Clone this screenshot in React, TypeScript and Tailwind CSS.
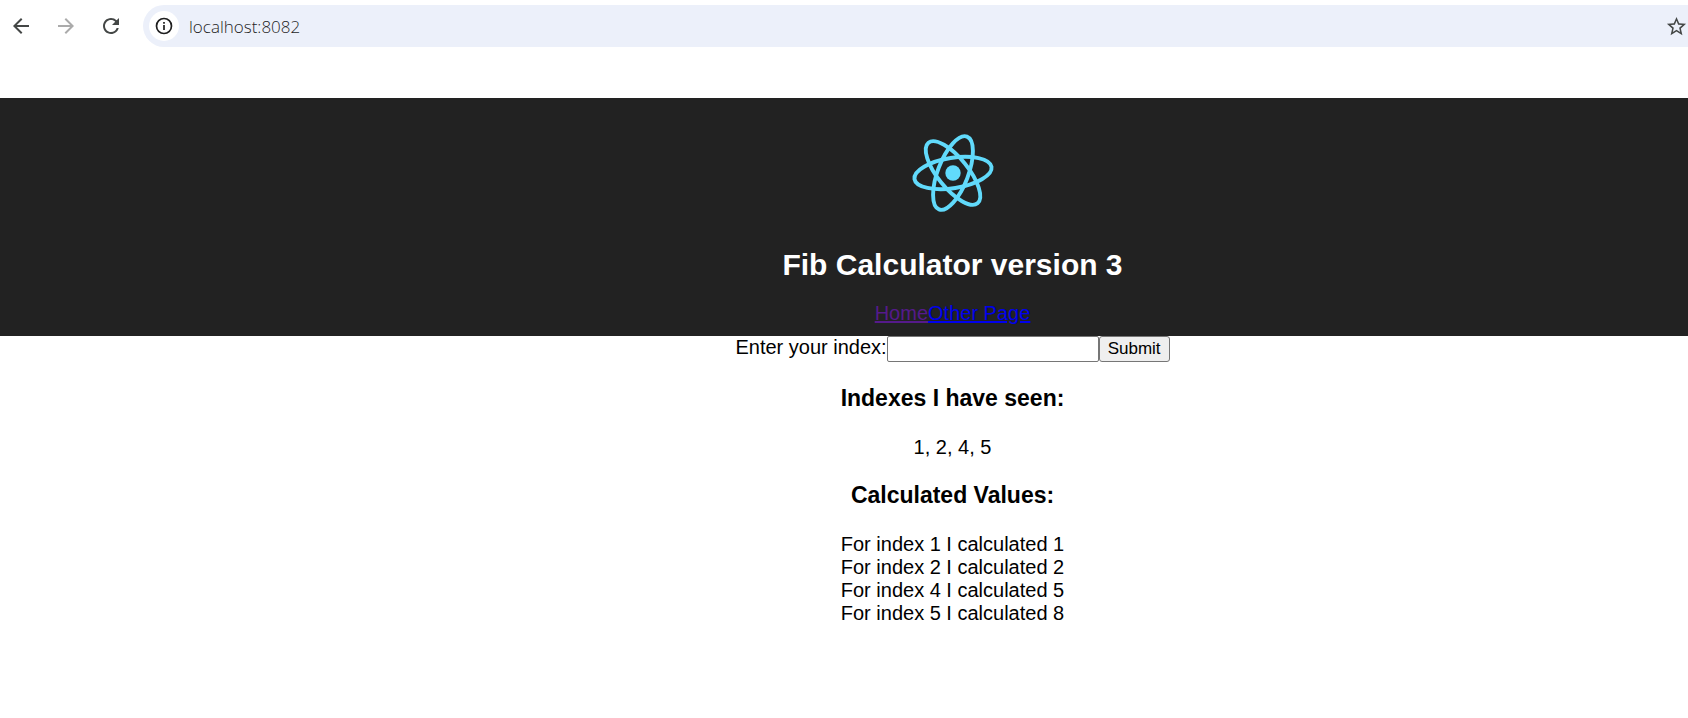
import React from "react";
import { MdArrowBack, MdArrowForward, MdRefresh, MdStarBorder } from "react-icons/md";

const seenIndexes = [1, 2, 4, 5];
const values = [
  { index: 1, value: 1 },
  { index: 2, value: 2 },
  { index: 4, value: 5 },
  { index: 5, value: 8 },
];

function BrowserBar() {
  return (
    <div className="flex items-center pt-[5px] font-['Open_Sans','Noto_Sans',sans-serif]">
      <div className="flex w-[143px] shrink-0 items-center gap-[21px] pl-[9px]">
        <button type="button" aria-label="Back" className="text-[#444746]">
          <MdArrowBack className="size-6" />
        </button>
        <button type="button" aria-label="Forward" className="text-[#ababab]">
          <MdArrowForward className="size-6" />
        </button>
        <button type="button" aria-label="Reload" className="text-[#444746]">
          <MdRefresh className="size-6" />
        </button>
      </div>
      <div className="flex h-[42px] flex-1 items-center rounded-l-full bg-[#ecf0fa] pl-[6px]">
        <button
          type="button"
          aria-label="Site information"
          className="flex size-[30px] items-center justify-center rounded-full bg-white text-[#1f1f1f]"
        >
          <svg viewBox="0 0 20 20" className="size-5" fill="none" stroke="currentColor" strokeWidth="1.7">
            <circle cx="10" cy="10" r="7.5" />
            <path d="M10 9v5M10 6v1.8" />
          </svg>
        </button>
        <input
          type="text"
          aria-label="Address"
          defaultValue="localhost:8082"
          className="min-w-0 flex-1 bg-transparent pl-[10px] text-[17px] font-light text-[#1f1f1f] outline-none"
        />
        <button type="button" aria-label="Bookmark this page" className="text-[#444746]">
          <MdStarBorder className="size-[23px]" />
        </button>
      </div>
    </div>
  );
}

function Logo() {
  return (
    <svg viewBox="-50 -50 100 100" className="size-[100px]" aria-label="logo" role="img">
      <circle r="7.7" fill="#61dafb" />
      <g fill="none" stroke="#61dafb" strokeWidth="3.9" transform="rotate(-9)">
        <ellipse rx="39" ry="15.2" />
        <ellipse rx="39" ry="15.2" transform="rotate(60)" />
        <ellipse rx="39" ry="15.2" transform="rotate(120)" />
      </g>
    </svg>
  );
}

export default function App() {
  return (
    <div className="bg-white font-['Liberation_Sans',Arial,sans-serif] text-xl leading-[23px] text-black">
      <BrowserBar />
      <div className="mt-[51px]">
        <header className="flex flex-col items-center bg-[#222222] pt-[25px] pb-[11px] pl-[217px] text-white">
          <Logo />
          <h1 className="mt-[25px] text-3xl leading-[34px] font-bold">Fib Calculator version 3</h1>
          <nav className="mt-5 flex">
            <a href="#home" className="text-[#551a8b] underline">Home</a>
            <a href="#other" className="text-[#0000ee] underline">Other Page</a>
          </nav>
        </header>
        <main className="flex flex-col items-center pb-20 pl-[217px] text-center">
          <form className="flex items-start" onSubmit={(e) => e.preventDefault()}>
            <label htmlFor="index">Enter your index:</label>
            <input
              id="index"
              type="text"
              className="h-[26px] w-[212px] rounded-xs border border-[#767676] bg-white px-1 text-[17px]"
            />
            <button
              type="submit"
              className="h-[26px] rounded-[3px] border border-[#767676] bg-[#efefef] px-2 text-[17px] leading-6"
            >
              Submit
            </button>
          </form>
          <h3 className="mt-[23px] text-[23px] leading-[27px] font-bold">Indexes I have seen:</h3>
          <p className="mt-6">{seenIndexes.join(", ")}</p>
          <h3 className="mt-[23px] text-[23px] leading-[27px] font-bold">Calculated Values:</h3>
          <div className="mt-6">
            {values.map((v) => (
              <div key={v.index}>{`For index ${v.index} I calculated ${v.value}`}</div>
            ))}
          </div>
        </main>
      </div>
    </div>
  );
}
